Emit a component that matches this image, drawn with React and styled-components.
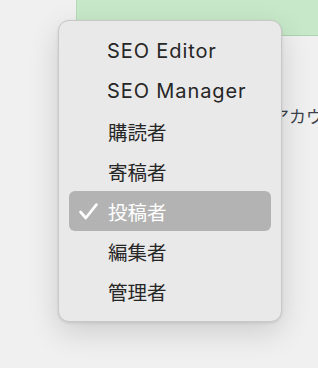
import React from "react";
import styled, { createGlobalStyle } from "styled-components";

const GlobalStyle = createGlobalStyle`
  html, body {
    margin: 0;
    padding: 0;
    background: #f0f0f1;
    overflow: hidden;
  }
  body {
    font-family: "Inter", "Noto Sans CJK JP", sans-serif;
    -webkit-font-smoothing: antialiased;
  }
`;

const Page = styled.div`
  position: relative;
  width: 318px;
  height: 368px;
  overflow: hidden;
`;

const Notice = styled.div`
  margin-left: 76px;
  height: 35px;
  background: #c7e9c9;
  border-left: 1px solid #b3dcb6;
  border-bottom: 1px solid #a9d6ac;
`;

const Label = styled.div`
  padding: 67px 0 0 272px;
  font-family: "Noto Sans CJK JP", sans-serif;
  font-size: 17px;
  line-height: 26px;
  color: #3c434a;
  white-space: nowrap;
`;

const Menu = styled.ul`
  position: absolute;
  left: 58px;
  top: 20px;
  width: 224px;
  box-sizing: border-box;
  margin: 0;
  padding: 10px 10px;
  list-style: none;
  background: #e9e9e9;
  border: 0.5px solid #c8c8c8;
  border-radius: 11px;
  box-shadow: 0 10px 30px rgba(0, 0, 0, 0.15), 0 1px 3px rgba(0, 0, 0, 0.1);
`;

const Item = styled.li`
  position: relative;
  height: 40px;
  display: flex;
  align-items: center;
  padding-left: ${(p) => (p.latin ? "38px" : "39px")};
  border-radius: 6px;
  font-family: "Inter", "Noto Sans CJK JP", sans-serif;
  font-size: ${(p) => (p.latin ? "20px" : "19.5px")};
  letter-spacing: ${(p) => (p.latin ? "0.9px" : "0")};
  color: ${(p) => (p.selected ? "#ffffff" : "#262626")};
  background: ${(p) => (p.selected ? "#b3b3b3" : "transparent")};
`;

const Check = styled.svg`
  position: absolute;
  left: 10px;
  top: 12px;
  width: 19px;
  height: 17px;
`;

const roles = [
  "SEO Editor",
  "SEO Manager",
  "購読者",
  "寄稿者",
  "投稿者",
  "編集者",
  "管理者",
];

export default function App() {
  return (
    <Page>
      <GlobalStyle />
      <Notice />
      <Label>アカウ</Label>
      <Menu>
        {roles.map((r) => (
          <Item
            key={r}
            selected={r === "投稿者"}
            latin={r.startsWith("SEO")}
          >
            {r === "投稿者" && (
              <Check viewBox="0 0 19 17">
                <path
                  d="M1.6 9 L6.8 15 L17.4 1.6"
                  fill="none"
                  stroke="#ffffff"
                  strokeWidth="2.7"
                  strokeLinecap="round"
                  strokeLinejoin="round"
                />
              </Check>
            )}
            {r}
          </Item>
        ))}
      </Menu>
    </Page>
  );
}
